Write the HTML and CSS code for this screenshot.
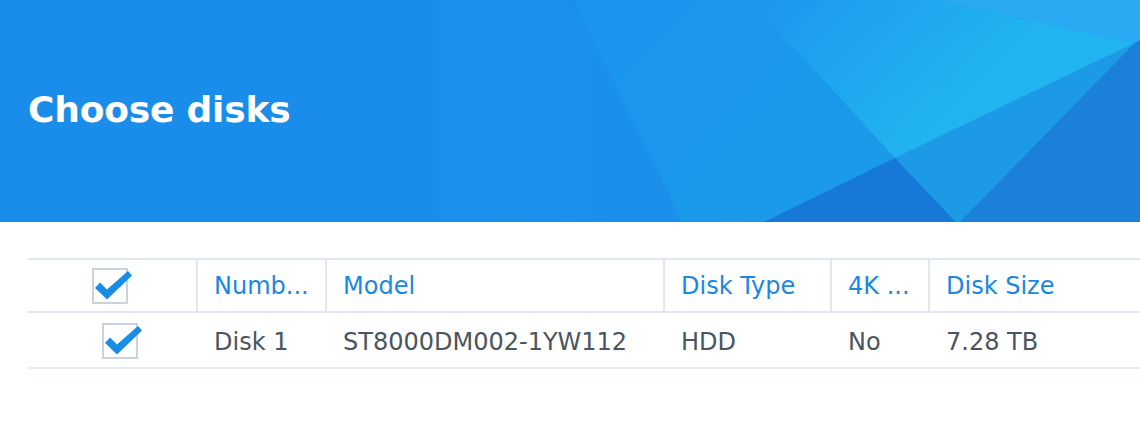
FILE: index.html
```html
<!DOCTYPE html>
<html>
<head>
<meta charset="utf-8">
<link rel="stylesheet" href="styles.css">
</head>
<body>
<header class="banner">
  <svg class="banner-bg" viewBox="0 0 1140 222" preserveAspectRatio="none" aria-hidden="true">
    <defs>
      <linearGradient id="gA" x1="0" y1="0" x2="1" y2="0">
        <stop offset="0" stop-color="#1a8ce9"/>
        <stop offset="0.38" stop-color="#1a8ce9"/>
        <stop offset="0.39" stop-color="#1b90ec"/>
        <stop offset="1" stop-color="#1a8fe9"/>
      </linearGradient>
      <linearGradient id="gC" x1="750" y1="0" x2="900" y2="160" gradientUnits="userSpaceOnUse">
        <stop offset="0" stop-color="#1c96ee"/>
        <stop offset="1" stop-color="#21b4f0"/>
      </linearGradient>
      <linearGradient id="gB" x1="575" y1="0" x2="800" y2="222" gradientUnits="userSpaceOnUse">
        <stop offset="0" stop-color="#1b95f0"/>
        <stop offset="1" stop-color="#1a9ae8"/>
      </linearGradient>
    </defs>
    <rect x="0" y="0" width="1140" height="222" fill="url(#gA)"/>
    <polygon points="575,0 750,0 895,158 764,222 682,222" fill="url(#gB)"/>
    <polygon points="750,0 938,0 1135,43 895,158" fill="url(#gC)"/>
    <polygon points="938,0 1140,0 1140,43 1135,43" fill="#2aaaf2"/>
    <polygon points="895,158 764,222 956,222" fill="#1679d8"/>
    <polygon points="895,158 1135,43 960,222 956,222" fill="#1c9ae6"/>
    <polygon points="1135,43 1140,40 1140,222 960,222" fill="#1a80d8"/>
  </svg>
  <h1 class="title">Choose disks</h1>
</header>

<div class="grid">
  <div class="row head">
    <div class="cell check-head">
      <svg class="cb" width="44" height="40" viewBox="0 0 44 40" aria-hidden="true">
        <rect x="1" y="1" width="34" height="34" fill="#fff" stroke="#c9d3dd" stroke-width="2"/>
        <path d="M3,20 L8,14.5 L15,21.5 L36,3 L40,7.5 L15,31.5 Z" fill="#1a8ce8"/>
      </svg>
    </div>
    <div class="cell">Numb...</div>
    <div class="cell">Model</div>
    <div class="cell">Disk Type</div>
    <div class="cell">4K ...</div>
    <div class="cell last">Disk Size</div>
  </div>
  <div class="row body">
    <div class="cell check-body">
      <svg class="cb" width="44" height="40" viewBox="0 0 44 40" aria-hidden="true">
        <rect x="1" y="1" width="34" height="34" fill="#fff" stroke="#c9d3dd" stroke-width="2"/>
        <path d="M3,20 L8,14.5 L15,21.5 L36,3 L40,7.5 L15,31.5 Z" fill="#1a8ce8"/>
      </svg>
    </div>
    <div class="cell">Disk 1</div>
    <div class="cell">ST8000DM002-1YW112</div>
    <div class="cell">HDD</div>
    <div class="cell">No</div>
    <div class="cell last">7.28 TB</div>
  </div>
</div>
</body>
</html>
```

FILE: styles.css
```css
html, body {
  margin: 0;
  padding: 0;
  background: #ffffff;
}

body {
  width: 1140px;
  height: 446px;
  overflow: hidden;
  font-family: "DejaVu Sans", Verdana, sans-serif;
}

.banner {
  position: relative;
  height: 222px;
  display: flex;
  align-items: center;
  padding-left: 28px;
  box-sizing: border-box;
  overflow: hidden;
  background: #1a8ce9;
}

.banner-bg {
  position: absolute;
  left: 0;
  top: 0;
  width: 100%;
  height: 100%;
}

.title {
  position: relative;
  margin: 0;
  padding-bottom: 3px;
  font-size: 36px;
  font-weight: bold;
  color: #ffffff;
  letter-spacing: -0.2px;
}

.grid {
  margin-top: 36px;
  margin-left: 28px;
}

.row {
  display: grid;
  grid-template-columns: 168px 129px 338px 167px 98px 1fr;
  font-size: 24px;
}

.row.head {
  border-top: 2px solid #dfe7ef;
  border-bottom: 2px solid #dfe7ef;
  height: 51px;
  color: #1a87e3;
}

.row.body {
  border-bottom: 2px solid #e6ecf2;
  height: 54px;
  color: #4b5561;
}

.cell {
  display: flex;
  align-items: center;
  padding-left: 16px;
  white-space: nowrap;
  overflow: visible;
}

.row.body .cell {
  padding-top: 3px;
}

.row.head .cell + .cell {
  border-left: 2px solid #dfe7ef;
}

.row.body .cell + .cell {
  border-left: 2px solid transparent;
}

.check-head {
  padding-left: 64px;
}

.row.body .check-body {
  padding-left: 74px;
  padding-top: 5px;
}

.cb {
  display: block;
  overflow: visible;
}

.check-head .cb {
  margin-top: 4px;
}
```
